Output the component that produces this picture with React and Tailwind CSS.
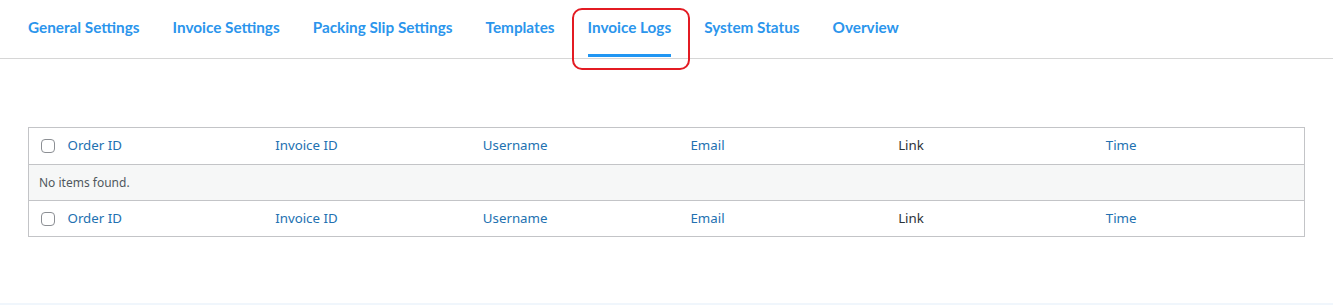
const tabs = [
  'General Settings',
  'Invoice Settings',
  'Packing Slip Settings',
  'Templates',
  'Invoice Logs',
  'System Status',
  'Overview'
]

const columns = [
  { name: 'Order ID', link: true },
  { name: 'Invoice ID', link: true },
  { name: 'Username', link: true },
  { name: 'Email', link: true },
  { name: 'Link', link: false },
  { name: 'Time', link: true }
]

function HeaderRow({ bottom }) {
  return (
    <tr className={bottom ? '' : 'border-b border-[#c3c4c7]'}>
      <td className={`w-[30px] pl-[12px] align-middle ${bottom ? 'h-[36px]' : 'h-[37px]'}`}>
        <span className="block w-[14px] h-[14px] rounded-[4px] border border-[#8c8f94] bg-white" />
      </td>
      {columns.map((c) => (
        <td
          key={c.name}
          className={`pl-[9px] align-middle text-[13.3px] ${c.link ? 'text-[#2271b1]' : 'text-[#2c3338]'}`}
        >
          {c.name}
        </td>
      ))}
    </tr>
  )
}

export default function App() {
  return (
    <div className="relative w-[1333px] h-[305px] bg-white" style={{ fontFamily: '"Open Sans", "Liberation Sans", sans-serif' }}>
      {/* tabs */}
      <nav className="flex h-[59px] gap-[33px] pl-[28px] border-b border-[#d6d6d6]">
        {tabs.map((t) => (
          <div
            key={t}
            className={`flex items-center h-full pb-[3px] text-[15.3px] font-bold text-[#2b95ec] ${
              t === 'Invoice Logs' ? 'relative' : ''
            }`}
            style={{ fontFamily: 'Lato, sans-serif' }}
          >
            {t}
            {t === 'Invoice Logs' && (
              <>
                <span className="absolute left-0 right-0 bottom-[1px] h-[3px] bg-[#2196f3]" />
                <span className="absolute -left-[16px] -right-[19px] top-[8px] h-[62px] rounded-[10px] border-2 border-[#e31b23]" />
              </>
            )}
          </div>
        ))}
      </nav>

      {/* table */}
      <div className="px-[28px] pt-[68px]">
        <table className="w-full border border-[#c3c4c7] border-collapse table-fixed" style={{ fontFamily: '"Noto Sans", "Open Sans", sans-serif' }}>
          <colgroup>
            <col className="w-[30px]" />
            <col /><col /><col /><col /><col /><col />
          </colgroup>
          <tbody>
            <HeaderRow />
            <tr className="border-b border-[#c3c4c7] bg-[#f6f7f7]">
              <td colSpan={7} className="h-[36px] pl-[10px] text-[12px] text-[#50575e]">
                No items found.
              </td>
            </tr>
            <HeaderRow bottom />
          </tbody>
        </table>
      </div>
      <div className="absolute left-0 right-0 bottom-0 h-[2px] bg-[#f0f6fc]" />
    </div>
  )
}
